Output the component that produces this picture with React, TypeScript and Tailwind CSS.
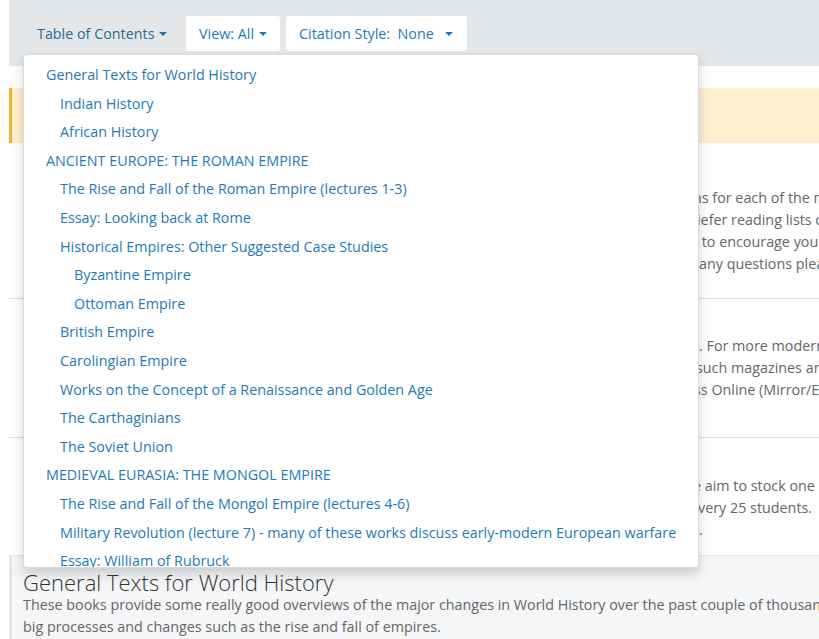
const tocItems: { label: string; level: number }[] = [
  { label: "General Texts for World History", level: 0 },
  { label: "Indian History", level: 1 },
  { label: "African History", level: 1 },
  { label: "ANCIENT EUROPE: THE ROMAN EMPIRE", level: 0 },
  { label: "The Rise and Fall of the Roman Empire (lectures 1-3)", level: 1 },
  { label: "Essay: Looking back at Rome", level: 1 },
  { label: "Historical Empires: Other Suggested Case Studies", level: 1 },
  { label: "Byzantine Empire", level: 2 },
  { label: "Ottoman Empire", level: 2 },
  { label: "British Empire", level: 1 },
  { label: "Carolingian Empire", level: 1 },
  { label: "Works on the Concept of a Renaissance and Golden Age", level: 1 },
  { label: "The Carthaginians", level: 1 },
  { label: "The Soviet Union", level: 1 },
  { label: "MEDIEVAL EURASIA: THE MONGOL EMPIRE", level: 0 },
  { label: "The Rise and Fall of the Mongol Empire (lectures 4-6)", level: 1 },
  { label: "Military Revolution (lecture 7) - many of these works discuss early-modern European warfare", level: 1 },
  { label: "Essay: William of Rubruck", level: 1 },
];

const Caret = () => (
  <span className="ml-[5px] inline-block h-0 w-0 border-x-[4px] border-t-[4px] border-x-transparent border-t-current align-middle" />
);

// the start of each line sits behind the open menu, the fixed width keeps the visible part in place
const Line = ({ hidden, visible, width }: { hidden: string; visible: string; width: string }) => (
  <p className="h-[22px] whitespace-nowrap">
    <span className={`inline-block overflow-hidden align-bottom ${width}`}>{hidden}</span>
    {visible}
  </p>
);

export default function App() {
  return (
    <div className="relative h-[639px] w-[819px] overflow-hidden bg-white pl-[9px] font-['Open_Sans',sans-serif] text-[14.33px] leading-[22px] text-[#666]">
      <div className="flex h-[66px] items-start gap-[6px] bg-[#e4e7ea] pl-[14px] pt-[16px] text-[#1f7ab5]">
        <button className="flex h-[35px] w-[157px] items-center pl-[14px] text-[#2a6a94]">
          Table of Contents
          <Caret />
        </button>
        <button className="flex h-[35px] w-[94px] items-center rounded-[3px] bg-white pl-[13px]">
          View: All
          <Caret />
        </button>
        <button className="flex h-[35px] w-[181px] items-center whitespace-pre rounded-[3px] bg-white pl-[13px]">
          Citation Style:  None
          <span className="ml-[11px] inline-block h-0 w-0 border-x-[4.5px] border-t-[4px] border-x-transparent border-t-current" />
        </button>
      </div>

      <div className="mt-[22px] h-[55px] border-l-[3px] border-[#fcae27] bg-[#fff0cf]" />

      <div className="border-b border-[#dcdde3] pb-[23px] pl-[14px] pt-[44px]">
        <Line width="w-[670px]" hidden="Below you will find suggested books, articles and primary source selectio" visible="ns for each of the major topics" />
        <Line width="w-[674px]" hidden="Some of the longer sections are followed by essay questions and br" visible="iefer reading lists of" />
        <Line width="w-[675px]" hidden="We have tried to keep the lists as varied as possible in order" visible=" to encourage you" />
        <Line width="w-[676px]" hidden="All of the titles are held in the main library and if you have " visible="any questions please" />
      </div>

      <div className="border-b border-[#dcdde3] pb-[36px] pl-[14px] pt-[36px]">
        <Line width="w-[676px]" hidden="Most of these works can be borrowed from the history collection" visible=". For more modern" />
        <Line width="w-[673px]" hidden="topics it is also worth looking at the library's archive of periodicals " visible="such magazines and" />
        <Line width="w-[671px]" hidden="and many older articles are available through the Historical Pre" visible="ss Online (Mirror/Express" />
      </div>

      <div className="pb-[14px] pl-[14px] pt-[37px]">
        <Line width="w-[670px]" hidden="Please remember that the library holds a limited number of copies and w" visible="e aim to stock one" />
        <Line width="w-[675px]" hidden="copy of every core title for each seminar group and one extra copy for e" visible="very 25 students." />
        <Line width="w-[676px]" hidden="Do return your books promptly so that other students can use them too" visible="." />
      </div>

      <div className="h-[84px] whitespace-nowrap border-l-[3px] border-t border-[#e4e7ea] bg-[#f5f6f8] pl-[11px] pt-[14px]">
        <h2 className="text-[22px] font-light leading-[24px] text-[#333]">General Texts for World History</h2>
        <p>These books provide some really good overviews of the major changes in World History over the past couple of thousand years</p>
        <p>big processes and changes such as the rise and fall of empires.</p>
      </div>

      <div className="absolute left-[23px] top-[54px] h-[514px] w-[676px] overflow-hidden rounded-[4px] border border-black/15 bg-white pt-[5.75px] text-[#1f7ab5] shadow-[0_6px_12px_rgba(0,0,0,0.175)]">
        {tocItems.map((item) => (
          <a
            key={item.label}
            className={`flex h-[28.6px] items-center whitespace-nowrap ${
              item.level === 0 ? "pl-[22px]" : item.level === 1 ? "pl-[36px]" : "pl-[50px]"
            }`}
          >
            {item.label}
          </a>
        ))}
      </div>
    </div>
  );
}
